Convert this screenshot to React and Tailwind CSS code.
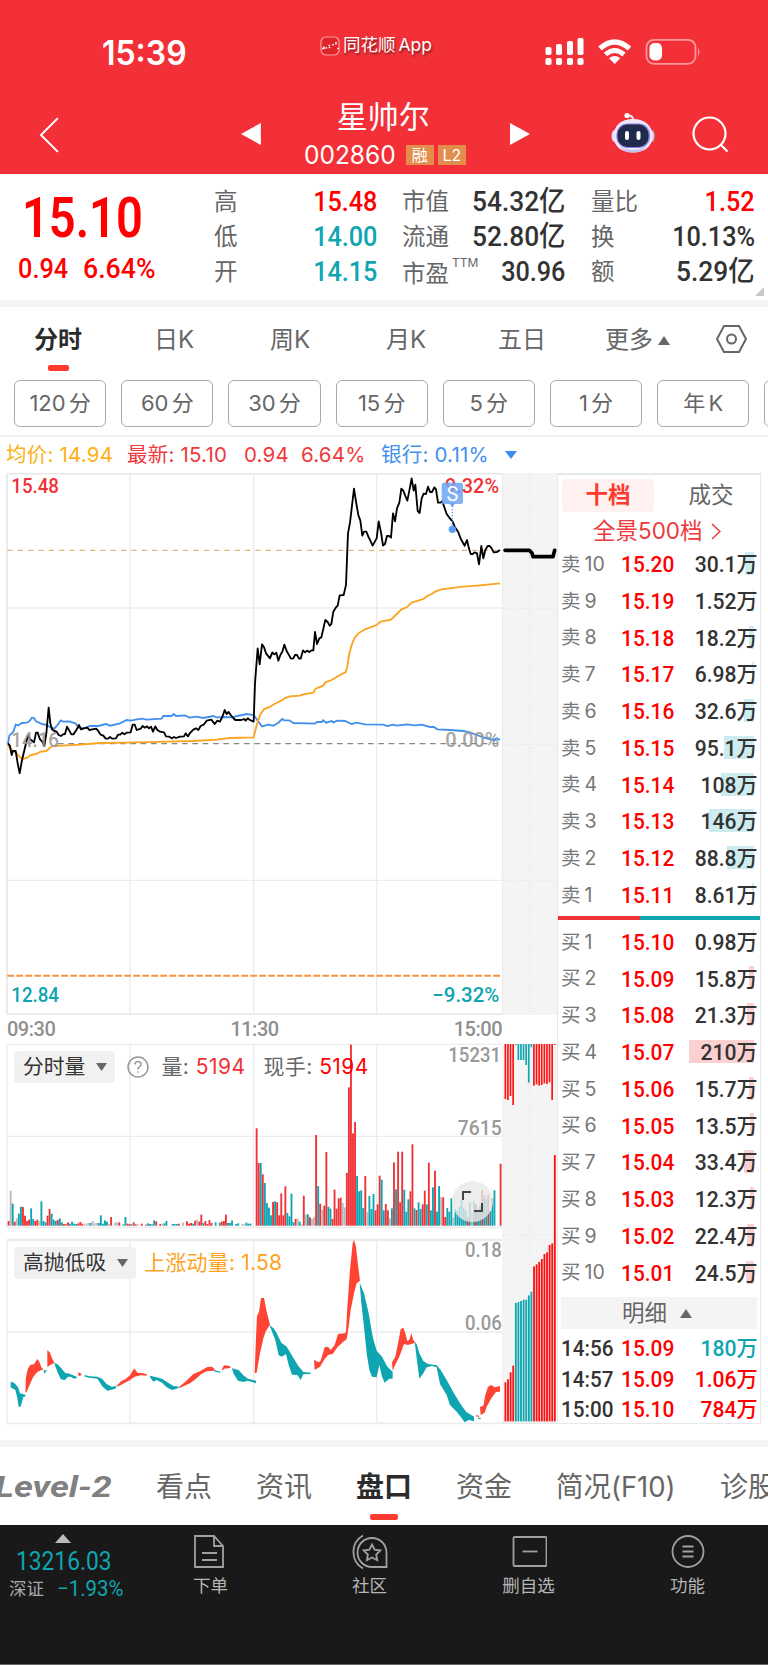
import React from 'react'

const RED = '#f03236'
const TEAL = '#0ea5b1'
const GRAY = '#b9b9b9'

const stats = [
  [
    { label: '高', value: '15.48', color: 'text-[#fe0000]' },
    { label: '低', value: '14.00', color: 'text-[#0ea5b1]' },
    { label: '开', value: '14.15', color: 'text-[#0ea5b1]' },
  ],
  [
    { label: '市值', value: '54.32亿', color: 'text-[#333]' },
    { label: '流通', value: '52.80亿', color: 'text-[#333]' },
    { label: '市盈', sup: 'TTM', value: '30.96', color: 'text-[#333]' },
  ],
  [
    { label: '量比', value: '1.52', color: 'text-[#fe0000]' },
    { label: '换', value: '10.13%', color: 'text-[#333]' },
    { label: '额', value: '5.29亿', color: 'text-[#333]' },
  ],
]

const periods = ['分时', '日K', '周K', '月K', '五日']
const minutes = ['120 分', '60 分', '30 分', '15 分', '5 分', '1 分', '年 K', '']

// [level, price, volume, depth bar width]
const asks = [
  [10, '15.20', '30.1万', 9], [9, '15.19', '1.52万', 1], [8, '15.18', '18.2万', 5],
  [7, '15.17', '6.98万', 2], [6, '15.16', '32.6万', 10], [5, '15.15', '95.1万', 30],
  [4, '15.14', '108万', 33], [3, '15.13', '146万', 45], [2, '15.12', '88.8万', 27],
  [1, '15.11', '8.61万', 2],
]
const bids = [
  [1, '15.10', '0.98万', 1], [2, '15.09', '15.8万', 5], [3, '15.08', '21.3万', 7],
  [4, '15.07', '210万', 65], [5, '15.06', '15.7万', 5], [6, '15.05', '13.5万', 4],
  [7, '15.04', '33.4万', 10], [8, '15.03', '12.3万', 4], [9, '15.02', '22.4万', 7],
  [10, '15.01', '24.5万', 8],
]
const trades = [
  ['14:56', '15.09', '180万', 'text-[#0ea5b1]'],
  ['14:57', '15.09', '1.06万', 'text-[#fe0000]'],
  ['15:00', '15.10', '784万', 'text-[#fe0000]'],
]

// Chart series use three units per pixel
const pricePts = '24,820 30,828 35,855 39,843 47,843 53,880 59,910 66,870 72,845 78,820 84,795 90,808 96,812 102,817 108,788 113,788 120,808 127,815 133,828 139,790 146,713 151,760 156,778 163,783 170,785 176,795 183,798 189,793 195,792 201,770 208,782 214,793 220,793 226,785 232,775 237,765 243,778 250,775 262,773 268,780 277,778 289,776 296,785 302,794 310,797 317,806 324,806 330,801 336,806 348,805 354,794 361,794 367,788 373,793 380,788 392,787 398,764 404,764 410,780 416,778 422,776 428,768 435,773 441,769 447,775 453,770 459,785 466,769 472,780 480,785 492,787 498,799 508,800 515,805 522,801 528,804 540,800 552,799 557,790 564,799 570,789 580,779 588,775 595,780 602,768 612,763 620,752 634,749 644,762 652,752 660,755 668,738 674,720 680,732 686,726 692,735 700,744 706,750 724,750 732,747 737,752 743,745 750,750 761,755 765,640 768,600 773,535 779,583 786,523 792,532 798,550 810,565 817,547 823,553 829,548 835,572 841,555 847,545 853,524 860,543 873,566 880,565 885,555 891,555 897,566 902,566 909,541 915,547 921,542 928,546 934,541 940,541 945,486 951,522 958,505 964,502 976,450 983,456 989,467 994,462 1000,425 1008,412 1013,407 1019,376 1031,375 1034,362 1038,345 1042,240 1044,190 1050,158 1062,56 1068,95 1075,135 1081,152 1087,197 1092,185 1099,185 1105,200 1111,212 1118,227 1126,212 1130,205 1136,154 1143,187 1149,227 1155,222 1161,198 1167,198 1173,203 1179,130 1185,154 1191,115 1198,98 1204,56 1210,62 1216,78 1222,92 1228,62 1235,25 1241,62 1246,44 1253,123 1259,129 1265,85 1271,71 1278,72 1284,50 1290,66 1296,66 1303,52 1308,58 1314,98 1321,98 1327,94 1334,115 1340,132 1352,148 1358,155 1364,170 1375,187 1383,208 1394,227 1401,210 1406,232 1412,252 1418,252 1424,247 1431,250 1437,283 1444,228 1450,265 1456,240 1463,228 1469,228 1475,235 1481,247 1491,246 1500,240'
const avgPts = '24,825 33,838 50,850 60,862 70,866 82,863 92,855 108,852 122,845 139,843 148,835 158,828 200,826 240,824 300,819 380,818 500,815 580,813 650,809 690,804 761,802 770,765 780,735 792,718 810,710 823,702 847,690 853,685 870,679 900,677 910,673 940,668 947,656 970,647 976,637 995,630 1020,615 1037,606 1042,590 1047,555 1055,525 1064,503 1075,490 1095,478 1130,465 1142,455 1173,449 1190,432 1205,418 1220,412 1235,398 1270,387 1282,378 1295,372 1305,365 1325,358 1390,350 1440,346 1500,340'
const bankPts = '24,822 28,797 40,785 47,764 55,766 66,759 80,758 88,754 96,743 102,744 108,754 127,762 140,765 152,772 163,776 175,762 182,751 190,755 208,754 226,760 236,772 250,776 270,768 295,768 318,762 330,767 360,760 380,750 393,752 410,748 426,746 440,749 485,746 490,738 515,738 521,732 528,738 555,736 568,743 590,740 610,744 640,738 650,742 680,741 695,742 712,738 740,732 761,735 770,748 786,769 805,764 820,767 835,758 847,747 853,751 868,751 880,759 945,761 951,756 965,756 970,751 978,758 995,753 1000,757 1012,752 1035,753 1055,762 1070,758 1095,763 1150,764 1162,768 1180,764 1190,767 1220,763 1245,766 1265,764 1290,771 1302,771 1312,778 1350,780 1390,783 1410,787 1430,795 1460,805 1480,810 1490,805 1500,810'

// One token per minute: colour (r/t/g) and height, "-" when nothing traded
const volumes = ('r14 g105 t66 r12 g22 t36 t57 r56 r30 r14 r18 t52 t20 r14 r18 g14 t73 t14 t10 r30 r50 t36 t18 t14 r17 t22 t10 r5 r4 r10 t6 t12 t6 t5 r7 r11 r6 g4 g7 g8 t8 g14 g7 g8 t8 t31 t6 t16 t12 g5 r26 - g10 g10 r10 - t4 t26 r6 r5 t4 r10 r4 g4 - r6 - r3 t7 t5 t4 t16 r13 - r5 g6 t7 t14 - - t5 t5 t5 r6 - g10 - r13 r6 r8 t6 r15 g18 r12 r33 t8 r14 r5 r17 r8 - t10 - t9 r12 r14 r33 t8 t8 t15 - t5 t7 - g5 g4 t9 t6 t6 - - '
  + 'r292 r188 t188 r154 t128 t68 t54 t31 r71 t73 r70 r31 r97 r31 r118 t38 t28 t96 t10 r20 g22 t12 g4 r90 g34 t34 r25 g20 g26 r272 t119 r66 g48 r60 r221 t57 t51 r20 r108 r51 r82 r84 g68 g55 r158 r415 r543 r277 r311 t149 t103 t106 t53 r149 g40 t89 t50 t95 r46 r64 r150 t138 t46 r65 r46 g22 t52 r190 t109 r222 r70 r222 t108 t42 t79 r103 r244 t52 r47 t70 t50 r64 r105 t64 r189 t46 t115 r165 t42 t119 g86 r85 r26 t53 t42 t82 g25 t50 t44 t58 t78 t54 t44 r25 t70 g42 t72 r64 t50 t60 r106 t90 t80 r93 t44 t82 t106 - - r186').split(' ')

const momentum = [
  ['t', '32,455 42,458 48,464 54,472 60,490 76,494 76,500 70,500 62,530 56,530 52,505 46,480 32,472'],
  ['r', '76,488 78,440 84,415 92,404 102,403 112,387 118,395 124,412 130,418 112,426 100,440 90,462 80,485'],
  ['t', '130,420 144,422 138,424 134,432'],
  ['r', '142,360 150,368 156,385 163,398 150,406 142,411'],
  ['t', '162,399 172,402 184,415 196,430 204,430 216,434 230,440 230,444 222,446 212,440 204,440 194,451 182,447 174,430'],
  ['r', '234,427 244,431 244,436 236,438'],
  ['t', '254,435 270,439 292,440 306,446 320,462 335,470 350,468 346,476 322,482 308,470 292,446 270,443 254,440'],
  ['r', '350,468 364,453 376,448 390,436 403,415 412,428 430,430 440,433 440,437 422,436 404,440 390,450 372,460 356,469'],
  ['t', '450,437 470,442 486,446 500,455 520,468 540,470 530,476 516,480 500,472 486,458 470,450 460,455 450,442'],
  ['r', '536,472 556,455 580,432 600,424 622,411 636,410 644,418 644,422 620,424 604,432 588,446 570,460 540,473'],
  ['t', '642,420 662,425 662,428 644,425'],
  ['r', '666,417 672,406 690,408 692,414 672,416 668,422'],
  ['t', '696,414 706,418 716,420 730,436 744,446 768,452 768,460 744,452 730,456 714,452 700,430'],
  ['r', '764,430 768,320 771,258 777,245 783,205 792,203 800,245 810,284 798,302 790,325 780,370 770,428'],
  ['t', '808,284 822,296 830,310 844,338 860,350 875,375 895,408 910,426 932,428 932,432 910,433 902,450 892,435 876,434 866,405 858,372 846,380 836,376 826,330'],
  ['r', '942,390 956,397 962,392 974,352 984,350 992,360 1004,345 1014,312 1034,310 1038,305 1042,230 1050,120 1058,40 1062,30 1068,50 1074,105 1080,152 1070,160 1062,190 1052,240 1046,290 1040,328 1030,335 1012,352 998,372 984,375 972,390 960,410 944,420'],
  ['t', '1079,158 1092,190 1106,250 1118,320 1130,362 1146,380 1162,410 1178,425 1178,446 1168,446 1154,458 1146,440 1138,405 1130,442 1116,440 1108,420 1100,370 1092,290 1084,220'],
  ['r', '1176,397 1186,380 1196,330 1202,298 1210,293 1216,310 1222,333 1228,330 1234,310 1240,330 1246,338 1224,345 1212,342 1198,380 1188,400 1178,422'],
  ['t', '1244,336 1250,342 1258,370 1270,393 1284,402 1310,406 1322,420 1340,450 1362,490 1380,520 1398,545 1422,560 1422,574 1406,570 1394,577 1382,560 1370,545 1350,525 1340,495 1320,462 1310,412 1296,408 1280,412 1270,430 1258,446 1252,400'],
  ['r', '1428,555 1438,558 1436,561 1428,559'],
  ['t', '1434,563 1442,563 1442,568 1434,566'],
  ['r', '1440,530 1450,528 1456,495 1464,470 1474,465 1484,472 1500,468 1500,485 1488,486 1474,505 1460,530 1454,548 1442,555'],
]

const auctionTop = 'r207 r210 r198 r225 t45 t90 t90 t90 t105 t158 t52 r167 r163 r167 r165 r160 r162 r157 r210 r45'.split(' ')
const auctionBottom = 'r1057 r1048 r1027 r1007 t819 t816 t813 t809 t809 t796 t785 r709 r703 r696 r687 r672 r667 r645 r640 r375'.split(' ')

const colorOf = (c) => (c === 'r' ? RED : c === 't' ? TEAL : GRAY)

function StatusBar() {
  return (
    <div className="flex items-center h-[90px] pt-[14px] pl-[102px] pr-[67px] text-white">
      <div className="w-[218px] pt-[2px] text-[34px] leading-none font-semibold">
        <span className="inline-block origin-left scale-x-[0.94]">15:39</span>
      </div>
      <div className="flex items-center gap-[3px] w-[225px] -mt-[13px] text-[17.5px] [text-shadow:1px_2px_2px_rgba(0,0,0,0.45)]">
        <svg width="20" height="20" viewBox="0 0 20 20" fill="none">
          <rect x="1" y="1" width="18" height="18" rx="5" fill="#e0242c" stroke="#ff9a9a" strokeWidth="1.2" />
          <path d="M2 12.500h2.500M5.500 12.500l1.500-1M8.500 10l1.500-1M9 12l1-1M13 9.500V8M16 8.500V6M4 10.500v2M17.500 13l1-1" stroke="#fff" strokeWidth="1.500" />
        </svg>
        <span className="whitespace-nowrap [word-spacing:-2px]">同花顺 App</span>
      </div>
      <svg width="156" height="28" viewBox="545 38 156 28" fill="#fff" className="shrink-0">
        <rect x="545.5" y="47" width="6" height="8" rx="1.8" />
        <rect x="556" y="44" width="6" height="11" rx="1.8" />
        <rect x="567" y="41" width="6" height="14" rx="1.8" />
        <rect x="577.5" y="38" width="6" height="17" rx="1.8" />
        <rect x="545.5" y="58" width="6" height="7" rx="1.8" />
        <rect x="556" y="58" width="6" height="7" rx="1.8" />
        <rect x="567" y="58" width="6" height="7" rx="1.8" />
        <rect x="577.5" y="58" width="6" height="7" rx="1.8" />
        <path d="M600 48.5Q614.500 35.500 629.500 48.500" fill="none" stroke="#fff" strokeWidth="5.200" />
        <path d="M605.500 54.500Q614.500 46.500 624 54.500" fill="none" stroke="#fff" strokeWidth="5" />
        <path d="M609 58.300Q614.700 53.500 620.300 58.300L614.700 64Z" />
        <rect x="646.500" y="39.800" width="49" height="24" rx="7.500" fill="none" stroke="#fff" strokeOpacity=".5" strokeWidth="1.800" />
        <path d="M698 48a6 6 0 0 1 0 8z" fillOpacity=".5" />
        <rect x="649.500" y="43" width="12.500" height="17.500" rx="5" />
      </svg>
    </div>
  )
}

function TitleBar() {
  return (
    <div className="flex items-center h-[84px] pl-[39px] pr-[39px] text-white">
      <svg width="20" height="36" viewBox="0 0 20 36" fill="none" stroke="#fff" strokeWidth="2" className="mt-[6px]">
        <path d="M19 1L2 18l17 17" />
      </svg>
      <svg width="21" height="22" viewBox="0 0 21 22" fill="#fff" className="ml-[182px] mt-[4px]">
        <path d="M0 11L20 0v22z" />
      </svg>
      <div className="flex flex-col items-center w-[250px] pt-[3px]">
        <div className="text-[31px] leading-[42px] -ml-[5px]">星帅尔</div>
        <div className="flex items-center gap-1 h-[34px] -ml-[2px]">
          <span className="text-[25.5px] leading-none mr-[7px] w-[91px]">
            <span className="inline-block origin-left scale-x-[0.96]">002860</span>
          </span>
          <span className="w-7 h-5 bg-[#e38d4c] text-[16px] leading-5 text-center">融</span>
          <span className="w-7 h-5 bg-[#e38d4c] text-[16px] leading-5 text-center">L2</span>
        </div>
      </div>
      <svg width="21" height="22" viewBox="0 0 21 22" fill="#fff" className="mt-[4px] shrink-0">
        <path d="M20 11L0 0v22z" />
      </svg>
      <svg width="44" height="42" viewBox="0 0 44 42" className="ml-[80px] mt-[1px] shrink-0">
        <path d="M22 8Q22 3 16 3.500" fill="none" stroke="#e7e8fa" strokeWidth="2" />
        <circle cx="16" cy="3.500" r="2.600" fill="#fff" />
        <ellipse cx="3.500" cy="24" rx="3" ry="6" fill="#d5d6f2" />
        <ellipse cx="40.500" cy="24" rx="3" ry="6" fill="#c9cbee" />
        <path d="M22 7C34 7 41.500 14 41.500 24S34 40.500 22 40.500 2.500 34 2.500 24 10 7 22 7z" fill="#eceafa" />
        <path d="M9 35q5 3 13 3t13-3q-4 5.500-13 5.500T9 35z" fill="#c4bfec" />
        <rect x="5.500" y="11.500" width="33.500" height="24.500" rx="11" fill="#8f7fe0" />
        <rect x="6.500" y="12.500" width="31" height="22.500" rx="10" fill="#1f2a4d" />
        <rect x="14" y="19" width="4" height="9" rx="2" fill="#fff" />
        <rect x="25.500" y="19" width="4" height="9" rx="2" fill="#fff" />
      </svg>
      <svg width="37" height="37" viewBox="0 0 37 37" fill="none" stroke="#fff" strokeWidth="2.200" className="ml-[37px] mt-[5px] shrink-0">
        <circle cx="17.500" cy="17.500" r="16" />
        <path d="M28.500 28.500l7 7" />
      </svg>
    </div>
  )
}

function QuotePanel() {
  const widths = ['w-[163px] ml-[214px]', 'w-[163px] ml-[25px]', 'w-[164px] ml-[26px]']
  return (
    <section className="relative flex h-[126px] bg-white">
      <div className="absolute left-0 top-0 w-[200px] text-[#fe0000] font-['Roboto',sans-serif] font-medium">
        <div className="pl-[22px] pt-[16px] h-[77px] text-[56px] leading-[56px] font-semibold">
          <span className="inline-block origin-left scale-x-[0.84] whitespace-nowrap">15.10</span>
        </div>
        <div className="flex pl-[18px] text-[27.5px] leading-9">
          <span className="w-[65px]"><span className="inline-block origin-left scale-x-[0.92]">0.94</span></span>
          <span className="inline-block origin-left scale-x-[0.97]">6.64%</span>
        </div>
      </div>
      {stats.map((col, i) => (
        <div key={i} className={`${widths[i]} pt-[10px]`}>
          {col.map((s) => (
            <div key={s.label} className="flex items-center justify-between h-[35.3px]">
              <span className={`text-[23.5px] leading-none text-[#666] whitespace-nowrap ${s.sup ? 'pt-1' : ''}`}>
                {s.label}
                {s.sup && <span className="relative -top-[15px] left-[3px] text-[12px]">{s.sup}</span>}
              </span>
              <span
                className={`inline-block origin-right text-[28px] leading-none font-medium font-['Roboto','Noto_Sans_CJK_SC',sans-serif] ${s.value.endsWith('亿') ? 'scale-x-[0.94]' : 'scale-x-[0.9]'} ${s.color}`}
              >
                {s.value}
              </span>
            </div>
          ))}
        </div>
      ))}
      <svg width="9" height="9" viewBox="0 0 9 9" className="absolute right-1 bottom-1"><path d="M9 0v9H0z" fill="#c8c8c8" /></svg>
    </section>
  )
}

function PeriodTabs() {
  return (
    <>
      <nav className="flex items-center h-[64px] pt-[2px] text-[24px] text-[#666]">
        {periods.map((p, i) => (
          <div key={p} className={`relative w-[116px] text-center ${i === 0 ? 'font-bold text-[#2b2b2b]' : ''}`}>
            {p}
            {i === 0 && <span className="absolute left-[48px] -bottom-[13px] w-[21px] h-[6px] rounded-[2px] bg-[#fe3a31]" />}
          </div>
        ))}
        <div className="flex items-center gap-[5px] ml-[25px]">
          更多
          <svg width="12" height="9" viewBox="0 0 12 9"><path d="M6 0l6 9H0z" fill="#666" /></svg>
        </div>
        <svg width="31" height="28" viewBox="0 0 31 28" fill="none" stroke="#666" strokeWidth="2" className="ml-[46px] -mt-[2px] shrink-0">
          <path d="M8 1h15l7 13-7 13H8L1 14z" />
          <circle cx="15.500" cy="14" r="4.500" />
        </svg>
      </nav>
      <div className="flex gap-[15px] h-[66px] pt-[9px] pl-[14px] border-b-2 border-[#f0f0f0] overflow-hidden">
        {minutes.map((m, i) => (
          <div key={i} className="flex items-center justify-center shrink-0 w-[92.2px] h-[47px] rounded-md border border-[#aaa] text-[22px] text-[#666] [word-spacing:-3px]">
            {m}
          </div>
        ))}
      </div>
    </>
  )
}

function Legend() {
  return (
    <div className="flex items-center h-[36px] pl-[6px] text-[20.5px] tracking-[0.2px] text-[#ee3a3c] whitespace-nowrap">
      <span className="w-[121px] text-[#fcb116]">均价: 14.94</span>
      <span className="w-[117px]">最新: 15.10</span>
      <span className="w-[57px]">0.94</span>
      <span className="w-[80px]">6.64%</span>
      <span className="w-[124px] text-[#4290ec]">银行: 0.11%</span>
      <svg width="12" height="8" viewBox="0 0 12 8"><path d="M0 0h12L6 8z" fill="#3c8cf0" /></svg>
    </div>
  )
}

function PriceChart() {
  return (
    <svg width="502" height="542" viewBox="0 9 1506 1626" fill="none" className="block font-['Roboto',sans-serif] font-medium" fontSize="62">
      <path d="M390 9v1626M761 9v1626M1130 9v1626M20 414h1486M20 1231h1486" stroke="#ececec" strokeWidth="4" />
      <path d="M21 11v1621h1485M21 11h1485" stroke="#e8e8e8" strokeWidth="5" />
      <path d="M22 241h1484" stroke="#d9a765" strokeWidth="3" strokeDasharray="16 15" />
      <path d="M174 821h1332" stroke="#888" strokeWidth="3.500" strokeDasharray="17 14" />
      <path d="M22 1517h1484" stroke="#f7913d" strokeWidth="6" strokeDasharray="20 7" />
      <polyline points={bankPts} stroke="#4290ec" strokeWidth="5.500" />
      <polyline points={avgPts} stroke="#fca31f" strokeWidth="5.500" />
      <polyline points={pricePts} stroke="#000" strokeWidth="5.500" strokeLinejoin="round" />
      <text x="34" y="68" fill={RED} textLength="143" lengthAdjust="spacingAndGlyphs">15.48</text>
      <text x="34" y="831" fill="#999" fillOpacity=".9" textLength="143" lengthAdjust="spacingAndGlyphs">14.16</text>
      <text x="1335" y="68" fill={RED} textLength="162" lengthAdjust="spacingAndGlyphs">9.32%</text>
      <text x="1336" y="831" fill="#999" fillOpacity=".9" textLength="162" lengthAdjust="spacingAndGlyphs">0.00%</text>
      <text x="34" y="1595" fill={TEAL} textLength="143" lengthAdjust="spacingAndGlyphs">12.84</text>
      <text x="1297" y="1595" fill={TEAL} textLength="201" lengthAdjust="spacingAndGlyphs">−9.32%</text>
      <rect x="1325" y="38" width="64" height="64" rx="6" fill="#6ba5f2" fillOpacity=".85" />
      <path d="M1348 100h18l-9 12z" fill="#6ba5f2" />
      <text x="1357" y="92" fill="#fff" textAnchor="middle" fontSize="60" fontWeight="400">S</text>
      <path d="M1357 108v64" stroke="#5a9cf5" strokeWidth="4" strokeDasharray="4 5" />
      <circle cx="1357" cy="178" r="11" fill="#5a9cf5" />
    </svg>
  )
}

function Pill({ children }) {
  return (
    <div className="flex items-center gap-[11px] h-8 pl-[9px] pr-2 rounded bg-[#f1f1f1] text-[20.8px] tracking-normal text-[#333]">
      {children}
      <svg width="11" height="8" viewBox="0 0 11 8"><path d="M0 0h11L5.500 8z" fill="#666" /></svg>
    </div>
  )
}

function VolumePanel() {
  return (
    <div className="relative h-[196px]">
      <svg width="502" height="196" viewBox="0 312 1506 588" className="absolute inset-0 overflow-visible font-['Roboto',sans-serif] font-medium" fontSize="62">
        <path d="M21 313v548M390 313v548M761 313v548M1130 313v548M20 313h1486M20 589h1486M20 898h1486" stroke="#ececec" strokeWidth="4" />
        <path d="M20 862h1486" stroke="#ececec" strokeWidth="5" />
        {volumes.map((v, i) => {
          if (v === '-') return null
          const h = Number(v.slice(1))
          return <rect key={i} x={23 + i * 6.15} y={857 - h} width="5.600" height={h} fill={colorOf(v[0])} />
        })}
        <text x="1345" y="365" fill="#999" textLength="158" lengthAdjust="spacingAndGlyphs">15231</text>
        <text x="1373" y="584" fill="#999" textLength="132" lengthAdjust="spacingAndGlyphs">7615</text>
      </svg>
      <div className="relative flex items-center pt-[7px] pl-[14px] text-[21px] tracking-[0.45px] text-[#666] whitespace-nowrap">
        <Pill>分时量</Pill>
        <svg width="22" height="22" viewBox="0 0 22 22" fill="none" stroke="#999" strokeWidth="1.500" className="ml-3">
          <circle cx="11" cy="11" r="10" />
          <path d="M8 8.500q0-3 3-3t3 2.800q0 1.500-1.600 2.500T11 13v.5M11 15.200v1.600" />
        </svg>
        <span className="ml-[12px] w-[102px]">量: <span className="text-[#f03236]">5194</span></span>
        <span>现手: <span className="text-[#fe0000]">5194</span></span>
      </div>
      <div className="absolute left-[452px] top-[137px] flex items-center justify-center w-[41px] h-[41px] rounded-full bg-[#e8e8e8]/80">
        <svg width="21" height="21" viewBox="0 0 21 21" fill="none" stroke="#444" strokeWidth="2">
          <path d="M1 9V1h8M12 20h8v-8" />
        </svg>
      </div>
    </div>
  )
}

function MomentumPanel() {
  return (
    <div className="relative h-[184px]">
      <svg width="502" height="184" viewBox="0 30 1506 552" className="absolute inset-0 overflow-visible font-['Roboto',sans-serif] font-medium" fontSize="62">
        <path d="M21 31v549M390 31v549M761 31v549M1130 31v549M20 32h1486M20 306h1486" stroke="#ececec" strokeWidth="4" />
        <path d="M20 580h1486" stroke="#ececec" strokeWidth="5" />
        {momentum.map(([c, points], i) => (
          <polygon key={i} points={points} fill={c === 'r' ? '#ff4433' : TEAL} />
        ))}
        <text x="1395" y="82" fill="#999" textLength="110" lengthAdjust="spacingAndGlyphs">0.18</text>
        <text x="1395" y="300" fill="#999" textLength="110" lengthAdjust="spacingAndGlyphs">0.06</text>
      </svg>
      <div className="relative flex items-center gap-[8px] pt-[7px] pl-[14px] text-[21px] tracking-[0.2px] text-[#fca31f] whitespace-nowrap">
        <Pill>高抛低吸</Pill>
        上涨动量: 1.58
      </div>
    </div>
  )
}

// Closing call auction, drawn beside the main session
function AuctionStrip() {
  return (
    <div className="w-[55px]">
      <svg width="55" height="542" viewBox="756 9 165 1626" fill="none" className="block bg-[#f4f4f4]">
        <path d="M840 12v1620M760 415h158M760 823h158M760 1231h158" stroke="#e4e4e4" strokeWidth="3" strokeDasharray="4 6" />
        <path d="M757 9v1626" stroke="#e8e8e8" strokeWidth="3" />
        <path d="M765 241h73l8 8 3 11h60l5-19" stroke="#000" strokeWidth="11" strokeLinecap="round" strokeLinejoin="round" />
      </svg>
      <div className="h-[29px]" />
      <svg width="55" height="380" viewBox="756 42 165 1140" className="block bg-[#f4f4f4]">
        <path d="M840 42v1138M760 615h158" stroke="#e4e4e4" strokeWidth="3" strokeDasharray="4 6" />
        {auctionTop.map((v, i) => (
          <rect key={i} x={763.500 + i * 7.800} y="42" width="5" height={Number(v.slice(1)) - 42} fill={v[0] === 'r' ? '#fe1010' : TEAL} />
        ))}
        {auctionBottom.map((v, i) => (
          <rect key={i} x={763.500 + i * 7.800} y={Number(v.slice(1))} width="5.500" height={1174 - Number(v.slice(1))} fill={v[0] === 'r' ? '#fe1010' : TEAL} />
        ))}
        <path d="M756 1180h165" stroke="#e8e8e8" strokeWidth="5" />
      </svg>
    </div>
  )
}

function DepthRow({ side, row, bar }) {
  const [level, price, volume, width] = row
  return (
    <div className="relative flex items-center h-[36.78px] pt-[0.5px] pl-[3px] pr-[2px] font-['Roboto','Noto_Sans_CJK_SC',sans-serif]">
      <span className={`absolute right-[6px] top-[6px] h-[23px] ${bar}`} style={{ width }} />
      <span className="relative flex items-center gap-[4px] w-[60px] text-[19.5px] leading-none text-[#777] font-['Inter','Noto_Sans_CJK_SC',sans-serif]">
        {side}<span>{level}</span>
      </span>
      <span className="relative text-[22px] font-medium text-[#fe0000]">
        <span className="inline-block origin-left scale-x-[0.95]">{price}</span>
      </span>
      <span className="relative ml-auto inline-block origin-right scale-x-[0.96] text-[22px] font-medium text-[#333] whitespace-nowrap">
        {volume}
      </span>
    </div>
  )
}

function OrderBook() {
  return (
    <aside className="w-[204px] h-[951px] border-t-2 border-x border-b border-[#e8e8e8]">
      <div className="flex pt-[4px] pl-[4px] text-[22.5px] text-center">
        <span className="w-[92px] h-[33px] leading-[32px] rounded bg-[#fff1f0] font-bold text-[#fe3a31]">十档</span>
        <span className="w-[104px] leading-[32px] text-[#666] pl-[10px]">成交</span>
      </div>
      <div className="flex items-center h-[34px] pl-[35px] pt-[4px] gap-[8px] text-[22.5px] text-[#ee3a3c]">
        <span className="whitespace-nowrap">全景500档</span>
        <svg width="10" height="17" viewBox="0 0 10 17" fill="none" stroke="#ee3a3c" strokeWidth="1.500"><path d="M1 1l8 7.500L1 16" /></svg>
      </div>
      {asks.map((row) => <DepthRow key={row[0]} side="卖" row={row} bar="bg-[#cdecef]" />)}
      <div className="flex h-1 mt-[2px] mb-[4px]">
        <span className="w-[82px] bg-[#f03236]" />
        <span className="grow bg-[#0ea5b1]" />
      </div>
      {bids.map((row) => <DepthRow key={row[0]} side="买" row={row} bar="bg-[#fbd0d1]" />)}
      <div className="flex items-center justify-center gap-[13px] h-8 mx-[3px] mt-[6px] mb-[4px] pr-1 bg-[#f4f4f4] text-[22.5px] text-[#666]">
        明细
        <svg width="12" height="9" viewBox="0 0 12 9"><path d="M6 0l6 9H0z" fill="#666" /></svg>
      </div>
      {trades.map(([time, price, volume, color]) => (
        <div key={time} className="flex items-center h-[30.500px] pl-[3px] pr-[2px] text-[22px] font-medium font-['Roboto','Noto_Sans_CJK_SC',sans-serif]">
          <span className="w-[60px] text-[#333]"><span className="inline-block origin-left scale-x-[0.94]">{time}</span></span>
          <span className="text-[#fe0000]"><span className="inline-block origin-left scale-x-[0.95]">{price}</span></span>
          <span className={`ml-auto inline-block origin-right scale-x-[0.96] whitespace-nowrap ${color}`}>{volume}</span>
        </div>
      ))}
    </aside>
  )
}

function SectionTabs() {
  return (
    <nav className="relative h-[78px] flex items-center pt-px text-[28px] text-[#666] whitespace-nowrap overflow-hidden">
      <span className="shrink-0 w-[157px] -ml-[5px] mr-[4px] text-[30px] font-bold italic text-[#808080] font-['Roboto',sans-serif]">
        <span className="inline-block origin-left scale-x-[1.2]">Level-2</span>
      </span>
      <span className="shrink-0 w-[100px]">看点</span>
      <span className="shrink-0 w-[100px]">资讯</span>
      <span className="relative shrink-0 w-[100px] font-bold text-[#2b2b2b]">
        盘口
        <span className="absolute left-[14px] -bottom-[12px] w-7 h-[6px] rounded-[2px] bg-[#fe3a31]" />
      </span>
      <span className="shrink-0 w-[100px]">资金</span>
      <span className="shrink-0 w-[164px]"><span className="inline-block origin-left scale-x-[0.98]">简况(F10)</span></span>
      <span className="shrink-0">诊股</span>
    </nav>
  )
}

function BottomBar() {
  const actions = [
    { label: '下单', icon: <><path d="M2 2h19l9 10v21H2z" /><path d="M21 2v10h9M9 19h15M9 26h15" /></> },
    { label: '社区', icon: <><path d="M20 4a14.500 14.500 0 0 0 0 29h14.500V18.500A14.500 14.500 0 0 0 20 4zM11 1.500a19 19 0 0 0 0 33" /><path d="M20 10.500l2.600 5.200 5.700.8-4.100 4 1 5.700-5.200-2.700-5.100 2.700 1-5.700-4.200-4 5.700-.8z" /></> },
    { label: '删自选', icon: <><rect x="2.500" y="3" width="33" height="29" rx="1" /><path d="M11.500 17.500h15" /></> },
    { label: '功能', icon: <><circle cx="18" cy="17.500" r="15.500" /><path d="M12.500 12.500h11M12.500 17.500h11M12.500 22.500h11" /></> },
  ]
  return (
    <footer className="flex h-[140px] bg-[#191919] border-b border-[#666]">
      <div className="w-[131px] pt-[9px]">
        <svg width="16" height="9" viewBox="0 0 16 9" className="block ml-[55px]"><path d="M8 0l8 9H0z" fill="#bbb" /></svg>
        <div className="pl-[16px] h-[34px] pt-px text-[25px] leading-[35px] text-[#0ea5b1] font-['Roboto',sans-serif]">
          <span className="inline-block origin-left scale-x-[0.91]">13216.03</span>
        </div>
        <div className="flex items-center pl-[9px] h-[24px] text-[17.5px] text-[#aaa]">
          <span className="w-[48px]">深证</span>
          <span className="inline-block origin-left scale-x-[0.95] text-[21.5px] text-[#0ea5b1] font-['Roboto',sans-serif]">−1.93%</span>
        </div>
      </div>
      {actions.map((a) => (
        <div key={a.label} className="flex flex-col items-center w-[159px] pt-[9px] text-[17.5px] text-[#b5b5b5]">
          <svg width="36" height="36" viewBox="0 0 36 36" fill="none" stroke="#a0a0a0" strokeWidth="1.800">{a.icon}</svg>
          <span className="leading-[30px] mt-px">{a.label}</span>
        </div>
      ))}
    </footer>
  )
}

export default function App() {
  return (
    <div className="w-[768px] h-[1665px] overflow-hidden bg-white font-['Inter','Noto_Sans_CJK_SC',sans-serif]">
      <header className="bg-[#f33038]">
        <StatusBar />
        <TitleBar />
      </header>
      <QuotePanel />
      <div className="h-[7px] bg-[#f4f4f4]" />
      <PeriodTabs />
      <Legend />
      <main className="flex h-[967px]">
        <div className="w-[502px]">
          <PriceChart />
          <div className="flex justify-between h-[29px] pl-[7px] text-[20px] tracking-[-0.5px] leading-[28px] text-[#8f8f8f] font-['Roboto',sans-serif] font-medium">
            <span>09:30</span>
            <span>11:30</span>
            <span>15:00</span>
          </div>
          <VolumePanel />
          <MomentumPanel />
        </div>
        <AuctionStrip />
        <OrderBook />
      </main>
      <div className="h-[7px] bg-[#f4f4f4]" />
      <SectionTabs />
      <BottomBar />
    </div>
  )
}
